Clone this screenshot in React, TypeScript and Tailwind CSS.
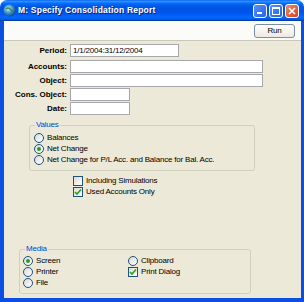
import React from 'react';

const FONT = "font-['Liberation_Sans',Arial,sans-serif]";

function Radio({ checked = false }: { checked?: boolean }) {
  return (
    <span className="relative flex h-[10px] w-[10px] shrink-0 items-center justify-center rounded-full border border-[#1c5180] bg-[linear-gradient(135deg,#dcdad2,#ffffff)]">
      {checked && <span className="h-[4px] w-[4px] rounded-full bg-[#21a121]" />}
    </span>
  );
}

function Checkbox({ checked = false }: { checked?: boolean }) {
  return (
    <span className="flex h-[10px] w-[10px] shrink-0 items-center justify-center border border-[#1c5180] bg-[linear-gradient(135deg,#dcdad2,#ffffff)]">
      {checked && (
        <svg width="8" height="8" viewBox="0 0 8 8">
          <path d="M1 4 L3 6 L7 1.5" fill="none" stroke="#21a121" strokeWidth="1.6" />
        </svg>
      )}
    </span>
  );
}

function Field({ label, width, value = '' }: { label: string; width: string; value?: string }) {
  return (
    <div className="flex h-[13px] items-center">
      <span className="w-[64px] pr-[1px] text-right font-bold tracking-normal text-black">{label}</span>
      <div className={`ml-[2px] h-[13px] ${width} border border-[#a7a6aa] bg-white pl-[2px] leading-[11px] text-black`}>
        {value}
      </div>
    </div>
  );
}

function Option({ label, type, checked }: { label: string; type: 'radio' | 'check'; checked?: boolean }) {
  return (
    <div className="flex h-[11px] items-center gap-[3px]">
      {type === 'radio' ? <Radio checked={checked} /> : <Checkbox checked={checked} />}
      <span className="text-black">{label}</span>
    </div>
  );
}

function Group({ title, className, children }: { title: string; className: string; children: React.ReactNode }) {
  return (
    <div className={`relative rounded-[3px] border border-[#d0d0bf] ${className}`}>
      <span className="absolute -top-[6px] left-[5px] bg-[#ece9d8] px-[1px] leading-[10px] text-[#0046d5]">{title}</span>
      {children}
    </div>
  );
}

export default function App() {
  return (
    <div className={`flex h-[302px] w-[304px] flex-col text-[8px] tracking-[-0.2px] ${FONT}`}>
      <div className="flex h-[21px] shrink-0 items-center rounded-t-[7px] bg-[linear-gradient(to_bottom,#0058ee_0%,#3593ff_5%,#288eff_8%,#127dff_12%,#036ffc_16%,#0262ee_22%,#0057e5_30%,#0054e3_40%,#0055eb_60%,#005bf5_70%,#026afe_80%,#0062ef_88%,#0052d6_94%,#0040ab_97%,#003092_100%)] pl-[3px] pr-[5px]">
        <svg width="13" height="13" viewBox="0 0 13 13" className="shrink-0">
          <defs>
            <radialGradient id="g" cx="40%" cy="35%" r="70%">
              <stop offset="0%" stopColor="#d8f0ff" />
              <stop offset="45%" stopColor="#4aa0d8" />
              <stop offset="100%" stopColor="#0a3f8a" />
            </radialGradient>
          </defs>
          <circle cx="6.5" cy="6.5" r="6" fill="url(#g)" />
          <path d="M3 5 Q5 3 7 5 T10 8" fill="none" stroke="#3b8a3b" strokeWidth="1.4" />
        </svg>
        <span className="ml-[2px] text-[8.5px] font-bold tracking-[0.2px] text-white [text-shadow:1px_1px_0_#0a1f7a]">
          M: Specify Consolidation Report
        </span>
        <div className="ml-auto flex gap-[2px]">
          <div className="flex h-[14px] w-[14px] items-end justify-start rounded-[3px] border border-white bg-[linear-gradient(135deg,#5b8ff7,#2264e6)] pb-[3px] pl-[3px]">
            <span className="h-[2px] w-[5px] bg-white" />
          </div>
          <div className="flex h-[14px] w-[14px] items-center justify-center rounded-[3px] border border-white bg-[linear-gradient(135deg,#5b8ff7,#2264e6)]">
            <span className="h-[8px] w-[8px] border border-t-2 border-white" />
          </div>
          <div className="flex h-[14px] w-[14px] items-center justify-center rounded-[3px] border border-white bg-[linear-gradient(135deg,#e98a6b,#d7401b)]">
            <svg width="8" height="8" viewBox="0 0 8 8">
              <path d="M1 1 L7 7 M7 1 L1 7" stroke="white" strokeWidth="1.6" />
            </svg>
          </div>
        </div>
      </div>
      <div className="flex flex-1 flex-col border-b-4 border-l-4 border-r-[3px] border-[#0b4fe2]">
        <div className="flex h-[20px] shrink-0 items-center justify-end border-b border-[#c9c7ba] bg-[#fbfbf8] pr-[6px]">
          <div className="flex h-[14px] w-[41px] items-center justify-center rounded-[3px] border border-[#7a8ea8] bg-[linear-gradient(to_bottom,#ffffff,#ece9e0)] text-black">
            Run
          </div>
        </div>
        <div className="flex flex-1 flex-col bg-[#ece9d8] pt-[3px]">
          <div className="flex flex-col gap-[1px]">
            <div className="mb-[2px]">
              <Field label="Period:" width="w-[109px]" value="1/1/2004:31/12/2004" />
            </div>
            <Field label="Accounts:" width="w-[193px]" />
            <Field label="Object:" width="w-[193px]" />
            <Field label="Cons. Object:" width="w-[60px]" />
            <Field label="Date:" width="w-[60px]" />
          </div>
          <Group title="Values" className="ml-[25px] mt-[10px] h-[46px] w-[226px] pl-[4px] pt-[6px]">
            <Option type="radio" label="Balances" />
            <Option type="radio" label="Net Change" checked />
            <Option type="radio" label="Net Change for P/L Acc. and Balance for Bal. Acc." />
          </Group>
          <div className="ml-[69px] mt-[4px] flex flex-col">
            <Option type="check" label="Including Simulations" />
            <Option type="check" label="Used Accounts Only" checked />
          </div>
          <Group title="Media" className="mb-[4px] ml-[15px] mt-auto grid h-[45px] w-[232px] grid-cols-[105px_1fr] content-start pl-[3px] pt-[5px]">
            <Option type="radio" label="Screen" checked />
            <Option type="radio" label="Clipboard" />
            <Option type="radio" label="Printer" />
            <Option type="check" label="Print Dialog" checked />
            <Option type="radio" label="File" />
          </Group>
        </div>
      </div>
    </div>
  );
}
